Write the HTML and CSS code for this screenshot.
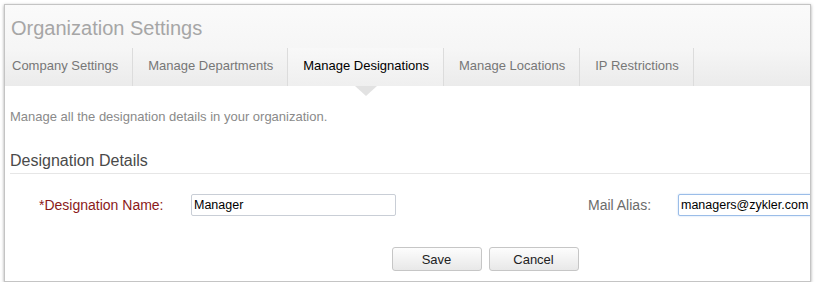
FILE: index.html
```html
<!DOCTYPE html>
<html lang="en">
<head>
    <meta charset="UTF-8">
    <title>Organization Settings</title>
    <link rel="stylesheet" href="styles.css">
</head>
<body>
    <div class="frame">
        <div class="header">
            <h1>Organization Settings</h1>
            <div class="tabs">
                <div class="tab first">Company Settings</div>
                <div class="tab">Manage Departments</div>
                <div class="tab active">Manage Designations</div>
                <div class="tab">Manage Locations</div>
                <div class="tab">IP Restrictions</div>
            </div>
        </div>

        <div class="content">
            <p class="intro">Manage all the designation details in your organization.</p>
            <h2>Designation Details</h2>

            <div class="form-row">
                <label class="req">*Designation Name:</label>
                <input type="text" class="field name" value="Manager">
                <label class="alias">Mail Alias:</label>
                <input type="text" class="field mail" value="managers@zykler.com">
            </div>

            <div class="actions">
                <button>Save</button>
                <button>Cancel</button>
            </div>
        </div>
    </div>
</body>
</html>
```

FILE: styles.css
```css
body {
    margin: 0;
    font-family: "Liberation Sans", Arial, sans-serif;
    background: #fff;
}
.frame {
    margin: 4px 0 0 4px;
    width: 807px;
    height: 278px;
    border: 1px solid #c4c4c4;
    box-shadow: 0 1px 3px rgba(0,0,0,0.35);
    overflow: hidden;
    box-sizing: border-box;
    background: #fff;
}
.header {
    background: linear-gradient(#fafafa, #f2f2f2);
}
h1 {
    margin: 0;
    padding: 12px 0 0 6px;
    height: 31px;
    font-size: 20px;
    font-weight: normal;
    color: #a6a6a6;
}
.tabs {
    display: flex;
    height: 38px;
    background: linear-gradient(#f6f6f6, #ebebeb);
}
.tab {
    position: relative;
    display: flex;
    align-items: center;
    padding: 0 14px 4px 15px;
    font-size: 13px;
    color: #777;
    border-right: 1px solid #dcdcdc;
}
.tab.first {
    padding-left: 7px;
    padding-right: 14px;
}
.tab.active {
    color: #000;
    background: linear-gradient(#f8f8f8, #efefef);
}
.tab.active::after {
    content: "";
    position: absolute;
    left: 50%;
    bottom: -10px;
    margin-left: -11px;
    border-left: 11px solid transparent;
    border-right: 11px solid transparent;
    border-top: 10px solid #e2e2e2;
}
.content {
    padding: 0 0 0 5px;
}
.intro {
    margin: 0;
    padding-top: 23px;
    font-size: 13px;
    color: #8a8a8a;
}
h2 {
    margin: 28px 0 0 0;
    padding-bottom: 3px;
    font-size: 16px;
    font-weight: normal;
    color: #4a4a4a;
    border-bottom: 1px solid #e6e6e6;
}
.form-row {
    display: flex;
    align-items: center;
    margin-top: 20px;
    white-space: nowrap;
}
.form-row label {
    flex: none;
    font-size: 14px;
}
.req {
    color: #8b1a1a;
    margin-left: 29px;
    width: 152px;
}
.alias {
    color: #6b6b6b;
    margin-left: 192px;
    width: 90px;
}
.field {
    flex: none;
    height: 22px;
    box-sizing: border-box;
    padding: 2px 2px;
    font-family: "Liberation Sans", Arial, sans-serif;
    font-size: 12.5px;
    color: #000;
    border: 1px solid #c9ced6;
    border-radius: 2px;
    margin: 0;
}
.field.name {
    width: 205px;
}
.field.mail {
    width: 160px;
    border-color: #9bbde8;
    box-shadow: 0 0 2px #b9d3f3;
}
.actions {
    display: flex;
    justify-content: center;
    gap: 7px;
    margin-top: 31px;
    padding-left: 150px;
}
button {
    width: 90px;
    height: 24px;
    font-family: "Liberation Sans", Arial, sans-serif;
    font-size: 13px;
    color: #222;
    background: linear-gradient(#fdfdfd, #e8e8e8);
    border: 1px solid #c6c6c6;
    border-radius: 3px;
}
```
